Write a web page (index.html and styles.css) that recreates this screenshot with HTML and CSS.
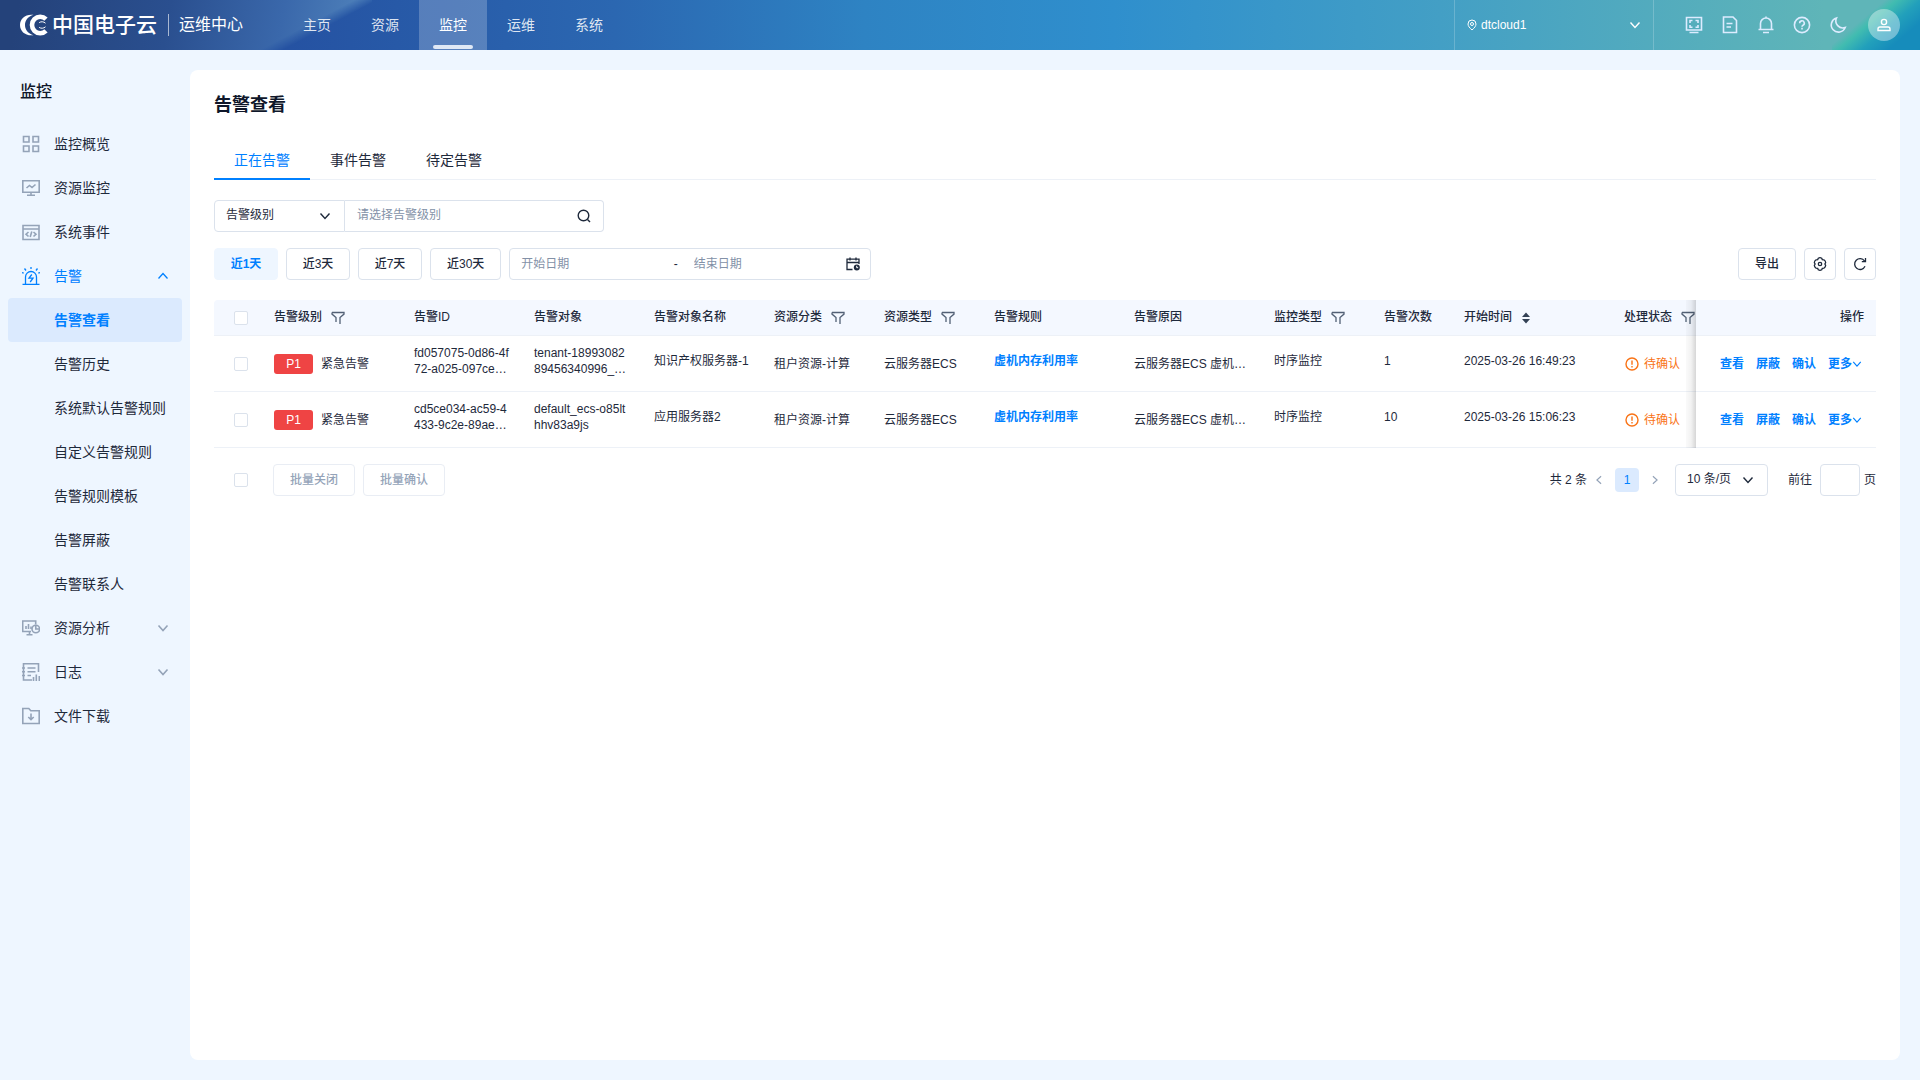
FILE: index.html
```html
<!DOCTYPE html>
<html lang="zh-CN">
<head>
<meta charset="utf-8">
<title>告警查看 - 运维中心</title>
<link rel="stylesheet" href="styles.css">
</head>
<body>
<svg class="sprite" aria-hidden="true">
  <symbol id="down" viewBox="0 0 12 12"><path d="M1.500 3.500 6 8.500l4.500-5"/></symbol>
  <symbol id="filter" viewBox="0 0 14 14"><path d="M1 1.500h12v1.600L9 6.500V13M1 1.500v1.600l4 3.400V11"/></symbol>
  <symbol id="warn" viewBox="0 0 14 14"><circle cx="7" cy="7" r="6"/><path d="M7 3.500v4.200M7 9v1.500"/></symbol>
</svg>

<header class="topbar">
  <a class="brand" href="#">
    <svg class="brand-mark" viewBox="0 0 28 22"><path class="fill" d="M13.500 .8C5.500-.2 0 4.500 0 11s5.500 11.200 13.500 10.200C8 19.500 5 15.500 5 11S8 2.500 13.500.8z"/><path d="M26 5.200A8.200 8.200 0 1 0 26 16.800" stroke-width="4.600"/><path d="M25.500 9.200c-2-1.800-4.500-1.800-6.300-.6M25.500 12.800c-2 1.800-4.500 1.800-6.300.6" stroke-width="1"/></svg>
    <span class="brand-name">中国电子云</span>
    <span class="brand-sub">运维中心</span>
  </a>
  <nav class="nav">
    <a href="#">主页</a>
    <a href="#">资源</a>
    <a href="#" class="on">监控</a>
    <a href="#">运维</a>
    <a href="#">系统</a>
  </nav>
  <button class="region" type="button">
    <svg class="pin" viewBox="0 0 10 12"><path d="M5 11C2.500 8.800 1 7 1 5a4 4 0 0 1 8 0c0 2-1.500 3.800-4 6z"/><circle cx="5" cy="5" r="1.500"/></svg>
    <span>dtcloud1</span>
    <svg class="chev" viewBox="0 0 12 12"><use href="#down"/></svg>
  </button>
  <div class="tools">
    <button type="button" aria-label="大屏"><svg viewBox="0 0 18 18"><path d="M1.500 1.500h15v12.500h-15zM4.500 16.500h9M7.500 4.500H5V7M10.500 4.500H13V7M7.500 11.200H5V9M10.500 11.200H13V9"/></svg></button>
    <button type="button" aria-label="文档"><svg viewBox="0 0 18 18"><path d="M2.500 1h9.500l3.500 3.500V16.500h-13zM5.500 7.500h6M5.500 11h4.500"/></svg></button>
    <button type="button" aria-label="通知"><svg viewBox="0 0 18 18"><path d="M9 .5V2.500M3.500 13.500V7.500a5.500 5.500 0 0 1 11 0v6M1.500 13.500h15M6 16.500h6"/></svg></button>
    <button type="button" aria-label="帮助"><svg viewBox="0 0 18 18"><circle cx="9" cy="9" r="7.600"/><path d="M6.700 7.300A2.300 2.300 0 1 1 10 9.200c-.7.400-1 .8-1 1.600M9 11.800v1.700"/></svg></button>
    <button type="button" aria-label="深色模式"><svg viewBox="0 0 18 18"><path d="M7.500 2a7.200 7.200 0 1 0 8.700 9.500A7 7 0 0 1 7.500 2z"/></svg></button>
  </div>
  <button class="avatar" type="button" aria-label="用户"><svg viewBox="0 0 16 16"><circle cx="8" cy="5" r="2.600"/><path d="M2 13.500v-1.500a2 2 0 0 1 2-2h8a2 2 0 0 1 2 2v1.500z"/></svg></button>
</header>

<div class="body">
  <aside class="side">
    <h2>监控</h2>
    <nav>
      <a href="#"><svg viewBox="0 0 18 18"><path d="M1.500 1.500h5.500V7h-5.500zM11 1.500h5.500V7H11zM1.500 11h5.500v5.500h-5.500zM11 11h5.500v5.500H11z"/></svg>监控概览</a>
      <a href="#"><svg viewBox="0 0 18 18"><path d="M.8 1.800h16.400v11.400H.8zM9 13.200V16.300M5 16.300h8M4.500 9l3-2.500 2.500 2L13.500 5.500"/></svg>资源监控</a>
      <a href="#"><svg viewBox="0 0 18 18"><path d="M1 2.500h16v14H1zM1 6h16M6.500 9 4 11.200l2.500 2.300M11.500 9l2.500 2.200-2.500 2.300M9.800 8.500l-1.600 5.500"/></svg>系统事件</a>
      <a href="#" class="open"><svg viewBox="0 0 18 18"><path d="M.5 17.300h17M3.500 17V10a5.500 5.500 0 0 1 11 0v7M9 0V2M2.500 1.500l1.500 2M15.500 1.500l-1.500 2M0 5.500l1.700.7M18 5.500l-1.700.7M9.800 7.500 7 11.200h4L8.200 15"/></svg>告警<svg class="arrow up" viewBox="0 0 12 12"><use href="#down"/></svg></a>
      <a href="#" class="sub on">告警查看</a>
      <a href="#" class="sub">告警历史</a>
      <a href="#" class="sub">系统默认告警规则</a>
      <a href="#" class="sub">自定义告警规则</a>
      <a href="#" class="sub">告警规则模板</a>
      <a href="#" class="sub">告警屏蔽</a>
      <a href="#" class="sub">告警联系人</a>
      <a href="#"><svg viewBox="0 0 18 18"><path d="M9 12.500H.7V2h13v3.500M4 7v3M6.500 5v5M9 7.500V10M7.500 12.500V15.500M4.500 15.700h6"/><circle cx="13.800" cy="10" r="3.800"/><path d="M13.800 6v4h4"/></svg>资源分析<svg class="arrow" viewBox="0 0 12 12"><use href="#down"/></svg></a>
      <a href="#"><svg viewBox="0 0 18 18"><path d="M10 17H1.500V.7h15V9M0 5h3M0 8.700h3M0 12.500h3M5.500 5h8M5.500 8.700h8M5.500 12.500H9M11.500 18v-4M14.300 18v-6.500M17.300 18v-5"/></svg>日志<svg class="arrow" viewBox="0 0 12 12"><use href="#down"/></svg></a>
      <a href="#"><svg viewBox="0 0 18 18"><path d="M.8 1.500h6l2 2.200h8.400v12.800H.8zM9 6.500v6M6.300 10 9 12.700l2.700-2.700"/></svg>文件下载</a>
    </nav>
  </aside>

  <main class="card">
    <h1>告警查看</h1>
    <div class="tabs" role="tablist">
      <button type="button" role="tab" class="on" aria-selected="true">正在告警</button>
      <button type="button" role="tab">事件告警</button>
      <button type="button" role="tab">待定告警</button>
    </div>

    <form class="search">
      <label class="pick pick-field">
        <select aria-label="筛选字段"><option>告警级别</option></select>
        <svg viewBox="0 0 12 12"><use href="#down"/></svg>
      </label>
      <label class="keyword">
        <input type="text" aria-label="告警级别" placeholder="请选择告警级别">
        <svg viewBox="0 0 14 14"><circle cx="6.500" cy="6.500" r="5.300"/><path d="m10.500 10.500 2.500 2.500"/></svg>
      </label>
    </form>

    <div class="bar">
      <button type="button" class="btn day on">近1天</button>
      <button type="button" class="btn day">近3天</button>
      <button type="button" class="btn day">近7天</button>
      <button type="button" class="btn">近30天</button>
      <div class="range">
        <input type="text" aria-label="开始日期" placeholder="开始日期">
        <span>-</span>
        <input type="text" aria-label="结束日期" placeholder="结束日期">
        <svg viewBox="0 0 14 14"><path d="M6.500 12.500H1V2.200h12V7M1 5.500h12M4 .5v3M10 .5v3"/><circle class="solid" cx="10.800" cy="10.500" r="3"/><path class="hand" d="M10.700 8.800v1.900h1.500"/></svg>
      </div>
      <button type="button" class="btn push">导出</button>
      <button type="button" class="btn square" aria-label="设置"><svg viewBox="0 0 14 14"><path d="M5.300 1.200Q7 .2 8.700 1.200L9.300 2.600l1.600.2q1.700 1 1.800 2.900L11.900 7l.8 1.300q-.1 1.900-1.800 2.900l-1.600.2-.6 1.400q-1.700 1-3.400 0l-.6-1.400-1.600-.2q-1.700-1-1.800-2.900L2.100 7l-.8-1.300q.1-1.900 1.800-2.900l1.600-.2z"/><circle cx="7" cy="7" r="1.700"/></svg></button>
      <button type="button" class="btn square" aria-label="刷新"><svg viewBox="0 0 14 14"><path d="M12 9.300A5.400 5.400 0 1 1 11.500 4M12.500 1v3.700H8.800"/></svg></button>
    </div>

    <table class="grid">
      <colgroup>
        <col class="w48"><col class="w140"><col class="w120"><col class="w120"><col class="w120"><col class="w110"><col class="w110"><col class="w140"><col><col class="w110"><col class="w80"><col class="w160"><col class="w84"><col class="w180">
      </colgroup>
      <thead>
        <tr>
          <th class="sel"><input type="checkbox" aria-label="全选"></th>
          <th>告警级别<svg class="filter" viewBox="0 0 14 14"><use href="#filter"/></svg></th>
          <th>告警ID</th>
          <th>告警对象</th>
          <th>告警对象名称</th>
          <th>资源分类<svg class="filter" viewBox="0 0 14 14"><use href="#filter"/></svg></th>
          <th>资源类型<svg class="filter" viewBox="0 0 14 14"><use href="#filter"/></svg></th>
          <th>告警规则</th>
          <th>告警原因</th>
          <th>监控类型<svg class="filter" viewBox="0 0 14 14"><use href="#filter"/></svg></th>
          <th>告警次数</th>
          <th>开始时间<svg class="sort" viewBox="0 0 10 14"><path d="M5 1.500 9 6H1zM5 12.500 9 8H1z"/></svg></th>
          <th class="status">处理状态<svg class="filter" viewBox="0 0 14 14"><use href="#filter"/></svg></th>
          <th class="ops">操作</th>
        </tr>
      </thead>
      <tbody>
        <tr>
          <td class="sel"><input type="checkbox" aria-label="选择第1行"></td>
          <td><span class="tag">P1</span>紧急告警</td>
          <td class="tip wrap">fd057075-0d86-4f72-a025-097ce…</td>
          <td class="tip wrap">tenant-1899308289456340996_…</td>
          <td class="tip">知识产权服务器-1</td>
          <td>租户资源-计算</td>
          <td>云服务器ECS</td>
          <td class="tip"><a href="#">虚机内存利用率</a></td>
          <td>云服务器ECS 虚机…</td>
          <td class="tip">时序监控</td>
          <td class="tip">1</td>
          <td class="tip">2025-03-26 16:49:23</td>
          <td class="status"><span class="wait"><svg viewBox="0 0 14 14"><use href="#warn"/></svg>待确认</span></td>
          <td class="ops"><div><a href="#">查看</a><a href="#">屏蔽</a><a href="#">确认</a><a href="#">更多<svg viewBox="0 0 12 12"><use href="#down"/></svg></a></div></td>
        </tr>
        <tr>
          <td class="sel"><input type="checkbox" aria-label="选择第2行"></td>
          <td><span class="tag">P1</span>紧急告警</td>
          <td class="tip wrap">cd5ce034-ac59-4433-9c2e-89ae…</td>
          <td class="tip wrap">default_ecs-o85lthhv83a9js</td>
          <td class="tip">应用服务器2</td>
          <td>租户资源-计算</td>
          <td>云服务器ECS</td>
          <td class="tip"><a href="#">虚机内存利用率</a></td>
          <td>云服务器ECS 虚机…</td>
          <td class="tip">时序监控</td>
          <td class="tip">10</td>
          <td class="tip">2025-03-26 15:06:23</td>
          <td class="status"><span class="wait"><svg viewBox="0 0 14 14"><use href="#warn"/></svg>待确认</span></td>
          <td class="ops"><div><a href="#">查看</a><a href="#">屏蔽</a><a href="#">确认</a><a href="#">更多<svg viewBox="0 0 12 12"><use href="#down"/></svg></a></div></td>
        </tr>
      </tbody>
    </table>

    <div class="foot">
      <input type="checkbox" aria-label="批量选择">
      <div class="batch">
        <button type="button" class="btn" disabled>批量关闭</button>
        <button type="button" class="btn" disabled>批量确认</button>
      </div>
      <div class="pager">
        <span>共 2 条</span>
        <button type="button" aria-label="上一页"><svg class="prev" viewBox="0 0 12 12"><use href="#down"/></svg></button>
        <button type="button" class="on">1</button>
        <button type="button" aria-label="下一页"><svg class="next" viewBox="0 0 12 12"><use href="#down"/></svg></button>
        <label class="pick pick-size">
          <select aria-label="每页条数"><option>10 条/页</option></select>
          <svg viewBox="0 0 12 12"><use href="#down"/></svg>
        </label>
        <label class="jump">前往<input type="text">页</label>
      </div>
    </div>
  </main>
</div>
</body>
</html>
```
FILE: styles.css
```css
* { box-sizing: border-box; }

body {
  margin: 0;
  min-height: 100vh;
  display: flex;
  flex-direction: column;
  background: #eef6ff;
  color: #1e293b;
  font: 12px/16px "Liberation Sans", "Noto Sans CJK SC", sans-serif;
}

a { color: inherit; text-decoration: none; }
button, input, select { font: inherit; color: inherit; margin: 0; }
button { padding: 0; border: 0; background: none; cursor: pointer; }
svg { fill: none; stroke: currentColor; stroke-width: 1.4; flex: none; display: block; }
.sprite { position: absolute; width: 0; height: 0; }

/* Top bar */
.topbar {
  position: relative;
  display: flex;
  align-items: center;
  height: 50px;
  padding-right: 20px;
  color: #fff;
  background: linear-gradient(90deg, #2552a2 15%, #2b67b1 32%, #2e83c3 45%, #2f8fcd 58%, #439fc5 75%, #5fb5b8 95%);
  overflow: hidden;
}
.topbar::before, .topbar::after {
  content: "";
  position: absolute;
  top: 0;
  bottom: 0;
}
.topbar::before {
  left: 0;
  width: 372px;
  background: linear-gradient(100deg, #24427a 5%, #2a4f8f 45%, #3a68ab 75%, #5285bd 100%);
  mask-image: linear-gradient(152deg, #000 76%, transparent 81%);
}
.topbar::after {
  right: 0;
  width: 88px;
  background: linear-gradient(140deg, transparent 36%, #41bcb0 44%, #22a0bb 60%, #168cbb 78%);
}
.topbar > * { position: relative; z-index: 1; }
.brand { display: flex; align-items: center; width: 283px; padding-left: 20px; }
.brand-mark { width: 28px; height: 22px; margin-right: 4px; }
.fill { fill: currentColor; stroke: none; }
.brand-name { font-size: 21px; line-height: 22px; font-weight: 500; }
.brand-sub {
  margin-left: 11px;
  padding-left: 10px;
  border-left: 1px solid rgba(255, 255, 255, .6);
  font-size: 16px;
  line-height: 22px;
}
.nav { display: flex; margin-right: auto; }
.nav a {
  position: relative;
  padding: 0 20px;
  font-size: 14px;
  line-height: 50px;
  color: rgba(255, 255, 255, .85);
}
.nav .on { color: #fff; background: rgba(255, 255, 255, .22); }
.nav .on::after {
  content: "";
  position: absolute;
  left: 14px;
  right: 14px;
  bottom: 1px;
  height: 4px;
  border-radius: 2px;
  background: #dfe8f5;
}
.region {
  display: flex;
  align-items: center;
  gap: 4px;
  width: 200px;
  height: 50px;
  padding: 0 12px;
  border: solid rgba(255, 255, 255, .2);
  border-width: 0 1px;
  text-align: left;
}
.pin { width: 10px; height: 12px; stroke-width: 1; }
.chev { width: 12px; height: 12px; margin-left: auto; }
.tools { display: flex; gap: 18px; margin: 0 21px 0 31px; color: #dcecff; }
.tools svg { width: 18px; height: 18px; stroke-width: 1.6; }
.avatar {
  display: grid;
  place-items: center;
  width: 32px;
  height: 32px;
  border-radius: 50%;
  background: rgba(255, 255, 255, .38);
}
.avatar svg { width: 16px; height: 16px; }

/* Body */
.body { flex: 1; display: flex; padding-right: 20px; }
.side { flex: none; width: 190px; padding: 30px 8px 20px; }
.side h2 { margin: 0 0 18px; padding: 0 12px; font-size: 16px; line-height: 24px; font-weight: 500; color: #0f172a; }
.side nav a {
  display: flex;
  align-items: center;
  gap: 14px;
  height: 44px;
  padding: 0 13px 0 14px;
  border-radius: 4px;
  font-size: 14px;
}
.side nav svg { width: 18px; height: 18px; color: #94a3b8; stroke-width: 1.6; }
.side nav .arrow { width: 12px; height: 12px; margin-left: auto; }
.side nav .open, .side nav .open svg { color: #0080ff; }
.side nav .open svg { stroke-width: 1.3; }
.side nav .sub { padding-left: 46px; }
.side nav .on { background: #dbeafe; color: #0080ff; font-weight: 700; }
.up { transform: rotate(180deg); }

.card {
  flex: 1;
  min-width: 0;
  margin: 20px 0;
  padding: 22px 24px;
  border-radius: 8px;
  background: #fff;
}
.card h1 { margin: 0 0 20px; font-size: 18px; line-height: 26px; font-weight: 700; color: #0f172a; }
.tabs { display: flex; border-bottom: 1px solid #edf1f7; margin-bottom: 20px; }
.tabs button {
  height: 42px;
  margin-bottom: -1px;
  padding: 4px 20px 0;
  border-bottom: 2px solid transparent;
  font-size: 14px;
}
.tabs .on { color: #0080ff; border-color: #0080ff; }

.pick { position: relative; display: flex; }
.pick select {
  width: 100%;
  height: 32px;
  padding: 0 28px 2px 11px;
  border: 1px solid #dbe2ec;
  border-radius: 4px;
  background: none;
  appearance: none;
}
.pick svg { position: absolute; right: 14px; top: 10px; width: 12px; height: 12px; pointer-events: none; }

.search { display: flex; margin-bottom: 16px; }
.pick-field { width: 131px; }
.pick-field select { border-radius: 4px 0 0 4px; }
.keyword {
  display: flex;
  align-items: center;
  width: 259px;
  height: 32px;
  padding: 0 12px;
  border: 1px solid #dbe2ec;
  border-left: 0;
  border-radius: 0 4px 4px 0;
}
.keyword svg { width: 14px; height: 14px; }
.keyword input, .range input {
  flex: 1;
  min-width: 0;
  padding: 0;
  border: 0;
  outline: 0;
  background: none;
}
.keyword input { padding-bottom: 2px; }
::placeholder { color: #8391a7; opacity: 1; }

.bar { display: flex; gap: 8px; margin-bottom: 20px; }
.btn {
  height: 32px;
  padding: 0 16px;
  border: 1px solid #dbe2ec;
  border-radius: 4px;
  font-weight: 500;
}
.bar .day { width: 64px; padding: 0; }
.bar .on { background: #eef6ff; border-color: #eef6ff; color: #0080ff; font-weight: 700; }
.bar .square { display: grid; place-items: center; width: 32px; padding: 0; }
.square svg { width: 14px; height: 14px; stroke-width: 1.3; }
.push { margin-left: auto; }
.range {
  display: flex;
  align-items: center;
  width: 362px;
  padding: 0 10px 0 11px;
  border: 1px solid #dbe2ec;
  border-radius: 4px;
}
.range span { margin-right: 16px; }
.range svg { width: 14px; height: 14px; stroke-width: 1.3; }
.range .solid { fill: currentColor; stroke: none; }
.range .hand { stroke: #fff; stroke-width: 1; }

input[type="checkbox"] {
  display: block;
  width: 14px;
  height: 14px;
  border: 1px solid #dbe2ec;
  border-radius: 2px;
  background: #fff;
  appearance: none;
}

/* Alarm table */
.grid { width: 100%; table-layout: fixed; border-collapse: separate; border-spacing: 0; }
.w48 { width: 48px; }
.w80 { width: 80px; }
.w84 { width: 84px; }
.w110 { width: 110px; }
.w120 { width: 120px; }
.w140 { width: 140px; }
.w160 { width: 160px; }
.w180 { width: 180px; }
.grid th, .grid td { padding: 0 12px; border-bottom: 1px solid #edf1f7; text-align: left; white-space: nowrap; }
.grid th { height: 36px; padding-bottom: 2px; background: #f4f8ff; font-weight: 500; }
.grid th:first-child { border-radius: 4px 0 0 0; }
.grid td { height: 56px; }
.grid .sel { padding: 0 0 0 20px; }
.grid .tip { padding-bottom: 5px; }
.grid .wrap { white-space: normal; word-break: break-all; }
.grid td a { color: #0080ff; font-weight: 700; }
.filter, .sort { display: inline-block; vertical-align: -4px; height: 14px; }
.filter { width: 14px; margin-left: 9px; color: #526075; stroke-width: 1.3; }
.sort { width: 10px; margin-left: 9px; fill: #334155; stroke: none; }
.tag {
  display: inline-block;
  width: 39px;
  margin-right: 8px;
  border-radius: 3px;
  background: #ef4444;
  color: #fff;
  line-height: 20px;
  text-align: center;
}
.grid .status { padding-right: 0; }
.wait { display: flex; align-items: center; gap: 5px; padding-left: 1px; color: #f97316; }
.wait svg { width: 14px; height: 14px; stroke-width: 1.4; }
.grid .ops { position: relative; text-align: right; }
.grid td.ops { padding-right: 14px; }
.ops::before {
  content: "";
  position: absolute;
  top: 0;
  bottom: -1px;
  left: -10px;
  width: 10px;
  background: linear-gradient(90deg, rgba(0, 0, 0, .02), rgba(0, 0, 0, .05) 50%, rgba(0, 0, 0, .16));
}
.ops div { display: flex; justify-content: flex-end; gap: 12px; }
.ops a { display: flex; align-items: center; }
.ops svg { width: 10px; height: 10px; }

/* Batch actions and paging */
.foot { display: flex; align-items: center; padding: 16px 0 0 20px; }
.batch { display: flex; gap: 8px; margin-left: 25px; }
.batch .btn { width: 82px; }
.btn:disabled { color: #94a3b8; border-color: #e9edf4; }
.pager { display: flex; align-items: center; margin-left: auto; }
.pager button { display: grid; place-items: center; width: 24px; height: 24px; border-radius: 4px; }
.pager button svg { width: 10px; height: 10px; color: #94a3b8; }
.pager .on { margin: 0 4px; background: #dbeafe; color: #0080ff; }
.prev { transform: rotate(90deg); }
.next { transform: rotate(-90deg); }
.pick-size { width: 93px; margin: 0 20px 0 8px; }
.jump { display: flex; align-items: center; }
.jump input { width: 40px; height: 32px; margin: 0 4px 0 8px; border: 1px solid #dbe2ec; border-radius: 4px; }
```
